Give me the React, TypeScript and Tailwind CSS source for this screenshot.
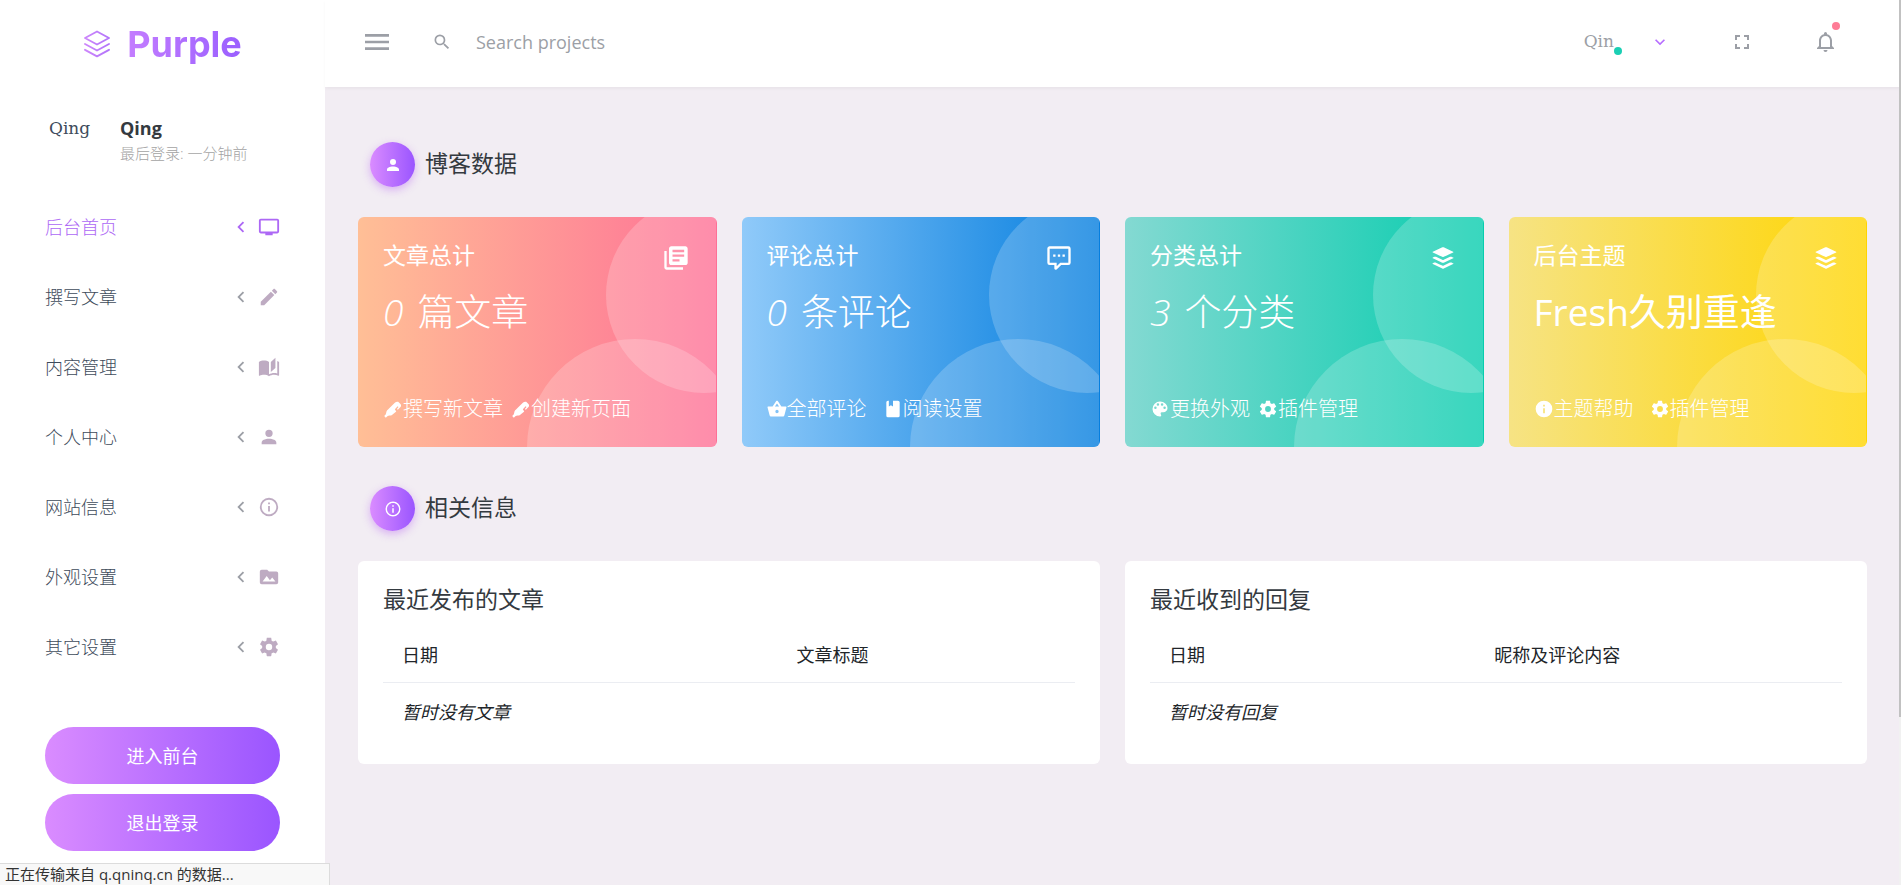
import React from "react";

const PATHS = {
  menu: "M3,6H21V8H3V6M3,11H21V13H3V11M3,16H21V18H3V16Z",
  magnify:
    "M9.5,3A6.5,6.5 0 0,1 16,9.5C16,11.11 15.41,12.59 14.44,13.73L14.71,14H15.5L20.5,19L19,20.5L14,15.5V14.71L13.73,14.44C12.59,15.41 11.11,16 9.5,16A6.5,6.5 0 0,1 3,9.5A6.5,6.5 0 0,1 9.5,3M9.5,5C7,5 5,7 5,9.5C5,12 7,14 9.5,14C12,14 14,12 14,9.5C14,7 12,5 9.5,5Z",
  chevronDown: "M7.41,8.58L12,13.17L16.59,8.58L18,10L12,16L6,10L7.41,8.58Z",
  chevronLeft: "M15.41,16.58L10.83,12L15.41,7.41L14,6L8,12L14,18L15.41,16.58Z",
  fullscreen:
    "M5,5H10V7H7V10H5V5M14,5H19V10H17V7H14V5M17,14H19V19H14V17H17V14M10,17V19H5V14H7V17H10Z",
  bell: "M16,17H7V10.5C7,8 9,6 11.5,6C14,6 16,8 16,10.5M18,16V10.5C18,7.43 15.86,4.86 13,4.18V3.5A1.5,1.5 0 0,0 11.5,2A1.5,1.5 0 0,0 10,3.5V4.18C7.13,4.86 5,7.43 5,10.5V16L3,18V19H20V18M11.5,22A2,2 0 0,0 13.5,20H9.5A2,2 0 0,0 11.5,22Z",
  television:
    "M21,17H3V5H21M21,3H3A2,2 0 0,0 1,5V17A2,2 0 0,0 3,19H8V21H16V19H21A2,2 0 0,0 23,17V5A2,2 0 0,0 21,3Z",
  pencil:
    "M20.71,7.04C21.1,6.65 21.1,6 20.71,5.63L18.37,3.29C18,2.9 17.35,2.9 16.96,3.29L15.12,5.12L18.87,8.87M3,17.25V21H6.75L17.81,9.93L14.06,6.18L3,17.25Z",
  book: "M19 2L14 6.5V17.5L19 13V2M6.5 5C4.55 5 2.45 5.4 1 6.5V21.16C1 21.41 1.25 21.66 1.5 21.66C1.6 21.66 1.65 21.59 1.75 21.59C3.1 20.94 5.05 20.5 6.5 20.5C8.45 20.5 10.55 20.9 12 22C13.35 21.15 15.8 20.5 17.5 20.5C19.15 20.5 20.85 20.81 22.25 21.56C22.35 21.61 22.4 21.59 22.5 21.59C22.75 21.59 23 21.34 23 21.09V6.5C22.4 6.05 21.75 5.75 21 5.5V19C19.9 18.65 18.7 18.5 17.5 18.5C15.8 18.5 13.35 19.15 12 20V6.5C10.55 5.4 8.45 5 6.5 5Z",
  account:
    "M12,4A4,4 0 0,1 16,8A4,4 0 0,1 12,12A4,4 0 0,1 8,8A4,4 0 0,1 12,4M12,14C16.42,14 20,15.79 20,18V20H4V18C4,15.79 7.58,14 12,14Z",
  infoOutline:
    "M11,9H13V7H11M12,20C7.59,20 4,16.41 4,12C4,7.59 7.59,4 12,4C16.41,4 20,7.59 20,12C20,16.41 16.41,20 12,20M12,2A10,10 0 0,0 2,12A10,10 0 0,0 12,22A10,10 0 0,0 22,12A10,10 0 0,0 12,2M11,17H13V11H11V17Z",
  info: "M13,9H11V7H13M13,17H11V11H13M12,2A10,10 0 0,0 2,12A10,10 0 0,0 12,22A10,10 0 0,0 22,12A10,10 0 0,0 12,2Z",
  folderImage:
    "M5,17L9.5,11L13,15.5L15.5,12.5L19,17M20,6H12L10,4H4A2,2 0 0,0 2,6V18A2,2 0 0,0 4,20H20A2,2 0 0,0 22,18V8A2,2 0 0,0 20,6Z",
  settings:
    "M12,15.5A3.5,3.5 0 0,1 8.5,12A3.5,3.5 0 0,1 12,8.5A3.5,3.5 0 0,1 15.5,12A3.5,3.5 0 0,1 12,15.5M19.43,12.97C19.47,12.65 19.5,12.33 19.5,12C19.5,11.67 19.47,11.34 19.43,11L21.54,9.37C21.73,9.22 21.78,8.95 21.66,8.73L19.66,5.27C19.54,5.05 19.27,4.96 19.05,5.05L16.56,6.05C16.04,5.66 15.5,5.32 14.87,5.07L14.5,2.42C14.46,2.18 14.25,2 14,2H10C9.75,2 9.54,2.18 9.5,2.42L9.13,5.07C8.5,5.32 7.96,5.66 7.44,6.05L4.95,5.05C4.73,4.96 4.46,5.05 4.34,5.27L2.34,8.73C2.21,8.95 2.27,9.22 2.46,9.37L4.57,11C4.53,11.34 4.5,11.67 4.5,12C4.5,12.33 4.53,12.65 4.57,12.97L2.46,14.63C2.27,14.78 2.21,15.05 2.34,15.27L4.34,18.73C4.46,18.95 4.73,19.03 4.95,18.95L7.44,17.94C7.96,18.34 8.5,18.68 9.13,18.93L9.5,21.58C9.54,21.82 9.75,22 10,22H14C14.25,22 14.46,21.82 14.5,21.58L14.87,18.93C15.5,18.67 16.04,18.34 16.56,17.94L19.05,18.95C19.27,19.03 19.54,18.95 19.66,18.73L21.66,15.27C21.78,15.05 21.73,14.78 21.54,14.63L19.43,12.97Z",
  library:
    "M4 6H2v14c0 1.1.9 2 2 2h14v-2H4V6zm16-4H8c-1.1 0-2 .9-2 2v12c0 1.1.9 2 2 2h12c1.1 0 2-.9 2-2V4c0-1.1-.9-2-2-2zm-1 9H9V9h10v2zm-4 4H9v-2h6v2zm4-8H9V5h10v2z",
  comment:
    "M9,22A1,1 0 0,1 8,21V18H4A2,2 0 0,1 2,16V4C2,2.89 2.9,2 4,2H20A2,2 0 0,1 22,4V16A2,2 0 0,1 20,18H13.9L10.2,21.71C10,21.9 9.75,22 9.5,22V22H9M10,16V19.08L13.08,16H20V4H4V16H10M17,11H15V9H17V11M13,11H11V9H13V11M9,11H7V9H9V11Z",
  buffer:
    "M12.6,2.86C15.27,4.1 18,5.39 20.66,6.63C20.81,6.7 21,6.75 21,6.95C21,7.15 20.81,7.19 20.66,7.26C18,8.5 15.3,9.77 12.62,11C12.21,11.21 11.79,11.21 11.38,11C8.69,9.76 6,8.5 3.32,7.25C3.18,7.19 3,7.14 3,6.94C3,6.76 3.18,6.71 3.31,6.65C6,5.39 8.74,4.1 11.44,2.85C11.73,2.72 12.3,2.73 12.6,2.86M12,21.15C11.8,21.15 11.66,21.07 11.38,20.97C8.69,19.73 6,18.47 3.33,17.22C3.19,17.15 3,17.11 3,16.9C3,16.7 3.19,16.66 3.34,16.59C3.78,16.38 4.23,16.17 4.67,15.96C5.12,15.76 5.56,15.76 6,15.97C7.79,16.8 9.57,17.63 11.35,18.46C11.79,18.67 12.23,18.66 12.67,18.46C14.45,17.62 16.23,16.79 18,15.96C18.44,15.76 18.87,15.75 19.29,15.95C19.77,16.16 20.24,16.39 20.71,16.61C20.78,16.64 20.85,16.68 20.91,16.73C21.04,16.83 21.04,17 20.91,17.08C20.83,17.14 20.74,17.19 20.65,17.23C18,18.5 15.33,19.72 12.66,20.95C12.46,21.05 12.19,21.15 12,21.15M12,16.17C11.9,16.17 11.55,16.07 11.36,16C8.68,14.74 6,13.5 3.34,12.24C3.2,12.18 3,12.13 3,11.93C3,11.72 3.2,11.68 3.35,11.61C3.8,11.39 4.25,11.18 4.7,10.97C5.13,10.78 5.56,10.78 6,11C7.78,11.82 9.58,12.66 11.38,13.5C11.79,13.69 12.21,13.69 12.63,13.5C14.43,12.65 16.23,11.81 18.04,10.97C18.45,10.78 18.87,10.78 19.29,10.97C19.76,11.19 20.24,11.41 20.71,11.63C20.77,11.66 20.84,11.69 20.9,11.74C21.04,11.85 21.04,12 20.89,12.12C20.84,12.16 20.77,12.19 20.71,12.22C18,13.5 15.31,14.75 12.61,16C12.42,16.09 12.08,16.17 12,16.17Z",
  marker:
    "M14.2,4.6C15.2,3.6 16.8,3 18.2,3.4L21.2,6.2C21.9,7.2 21.8,8.6 21,9.6L17.8,13L16.6,11.9L18.6,9.6L17.6,8.7L14.2,12.4L15.9,14.9L10.4,19.6C9.2,20.3 6.8,19.4 5.2,20.7L3.4,22.4L1.4,20.5L3,18.8C4.2,17.2 3.6,15 4.8,13.8Z",
  basket:
    "M12,2C11.6,2 11.3,2.2 11.1,2.5L6.7,9H1.5C1,9 0.5,9.4 0.6,10L3.1,19.5C3.4,20.4 4.1,21 5,21H19C19.9,21 20.6,20.4 20.9,19.5L23.4,10C23.5,9.4 23,9 22.5,9H17.3L12.9,2.5C12.7,2.2 12.4,2 12,2M12,5.3L14.5,9H9.5L12,5.3M12,13A2,2 0 0,1 14,15A2,2 0 0,1 12,17A2,2 0 0,1 10,15A2,2 0 0,1 12,13Z",
  notebook:
    "M18,22A2,2 0 0,0 20,20V4C20,2.89 19.1,2 18,2H12V9L9.5,7.5L7,9V2H6A2,2 0 0,0 4,4V20A2,2 0 0,0 6,22H18Z",
  palette:
    "M17.5,12A1.5,1.5 0 0,1 16,10.5A1.5,1.5 0 0,1 17.5,9A1.5,1.5 0 0,1 19,10.5A1.5,1.5 0 0,1 17.5,12M14.5,8A1.5,1.5 0 0,1 13,6.5A1.5,1.5 0 0,1 14.5,5A1.5,1.5 0 0,1 16,6.5A1.5,1.5 0 0,1 14.5,8M9.5,8A1.5,1.5 0 0,1 8,6.5A1.5,1.5 0 0,1 9.5,5A1.5,1.5 0 0,1 11,6.5A1.5,1.5 0 0,1 9.5,8M6.5,12A1.5,1.5 0 0,1 5,10.5A1.5,1.5 0 0,1 6.5,9A1.5,1.5 0 0,1 8,10.5A1.5,1.5 0 0,1 6.5,12M12,3A9,9 0 0,0 3,12A9,9 0 0,0 12,21A1.5,1.5 0 0,0 13.5,19.5C13.5,19.11 13.35,18.76 13.11,18.5C12.88,18.23 12.73,17.88 12.73,17.5A1.5,1.5 0 0,1 14.23,16H16A5,5 0 0,0 21,11C21,6.58 16.97,3 12,3Z",
};

type IconName = keyof typeof PATHS;

function Icon({ name, className }: { name: IconName; className: string }) {
  return (
    <svg viewBox="0 0 24 24" fill="currentColor" aria-hidden="true" className={`shrink-0 ${className}`}>
      <path d={PATHS[name]} />
    </svg>
  );
}

function Logo() {
  return (
    <a href="#" className="flex items-center gap-4">
      <svg viewBox="0 0 28 28" fill="none" stroke="url(#logo)" strokeWidth="1.9" strokeLinejoin="round" strokeLinecap="round" aria-hidden="true" className="size-7 shrink-0">
        <defs>
          <linearGradient id="logo" gradientUnits="userSpaceOnUse" x1="0" y1="0" x2="28" y2="0">
            <stop offset="0" stopColor="#cf88fb" />
            <stop offset="1" stopColor="#b072fa" />
          </linearGradient>
        </defs>
        <path d="M14 1.5 26 8 14 14.5 2 8Z" />
        <path d="M2 14 14 20.5 26 14" />
        <path d="M2 19.8 14 26.3 26 19.8" />
      </svg>
      <span className="bg-linear-to-r/srgb from-[#c47dff] to-[#9a5fff] bg-clip-text font-[Inter] text-4xl leading-[44px] font-bold text-transparent">
        Purple
      </span>
    </a>
  );
}

const NAV: { label: string; icon: IconName; active?: boolean }[] = [
  { label: "后台首页", icon: "television", active: true },
  { label: "撰写文章", icon: "pencil" },
  { label: "内容管理", icon: "book" },
  { label: "个人中心", icon: "account" },
  { label: "网站信息", icon: "infoOutline" },
  { label: "外观设置", icon: "folderImage" },
  { label: "其它设置", icon: "settings" },
];

function Sidebar() {
  return (
    <aside className="flex w-[325px] shrink-0 flex-col bg-white">
      <div className="flex items-start px-[45px] pt-7">
        <div className="w-[51px] pl-1 font-['DejaVu_Serif',serif] text-[17px] leading-[26px] text-[#3e4b5b]">Qing</div>
        <div className="pl-6">
          <div className="text-lg leading-[26px] font-bold text-[#343a40]">Qing</div>
          <div className="text-[15px] leading-6 font-light text-[#a3a3a3]">最后登录: 一分钟前</div>
        </div>
      </div>
      <nav className="mt-[27px] flex flex-col">
        {NAV.map((item) => (
          <a
            key={item.label}
            href="#"
            className={`flex h-[70px] items-center px-[45px] text-lg font-light ${item.active ? "text-[#ad68f5]" : "text-[#3e4b5b]"}`}
          >
            <span className="grow">{item.label}</span>
            <Icon name="chevronLeft" className={`mr-1.5 size-[22px] ${item.active ? "" : "text-[#9c9fa6]"}`} />
            <Icon name={item.icon} className={`size-[22px] ${item.active ? "" : "text-[#bba8bff5]"}`} />
          </a>
        ))}
      </nav>
      <div className="mt-[45px] mb-8 flex flex-col gap-2.5 px-[45px]">
        {["进入前台", "退出登录"].map((label) => (
          <button key={label} type="button" className="h-[57px] rounded-full bg-linear-to-r/srgb from-[#da8cff] to-[#9a55ff] text-lg text-white">
            {label}
          </button>
        ))}
      </div>
    </aside>
  );
}

function Header() {
  return (
    <header className="relative z-10 flex h-[87px] shrink-0 bg-white">
      <div className="flex w-[325px] shrink-0 items-center justify-center">
        <Logo />
      </div>
      <div className="flex grow items-center pr-[63px] pb-[3px] pl-9 text-[#9c9fa6] shadow-[0_2px_3px_rgba(0,0,0,0.04)]">
        <button type="button" aria-label="菜单">
          <Icon name="menu" className="size-8" />
        </button>
        <label className="ml-[39px] flex items-center gap-6">
          <Icon name="magnify" className="size-5" />
          <input type="text" placeholder="Search projects" aria-label="Search projects" className="w-72 bg-transparent text-lg outline-none placeholder:text-[#9c9fa6]" />
        </label>
        <button type="button" className="ml-auto flex items-center gap-7 font-['DejaVu_Serif',serif] text-[17px]">
          <span className="relative pr-2">
            Qin
            <span className="absolute right-0 bottom-0 size-2 rounded-full bg-[#1bcfb4]" />
          </span>
          <Icon name="chevronDown" className="size-5 text-[#b66dff]" />
        </button>
        <button type="button" aria-label="全屏" className="ml-[60px]">
          <Icon name="fullscreen" className="size-6" />
        </button>
        <button type="button" aria-label="通知" className="relative ml-[60px]">
          <Icon name="bell" className="size-6" />
          <span className="absolute -top-2 -right-0.5 size-2 rounded-full bg-[#fe7c96]" />
        </button>
      </div>
    </header>
  );
}

function SectionTitle({ icon, children }: { icon: IconName; children: React.ReactNode }) {
  return (
    <h2 className="flex items-center gap-2.5 pl-3 text-[23px] leading-7 text-[#343a40]">
      <span className="flex size-[45px] items-center justify-center rounded-full bg-linear-to-r/srgb from-[#da8cff] to-[#9a55ff] text-white shadow-[0_3px_8px_rgba(183,102,242,0.45)]">
        <Icon name={icon} className="size-[18px]" />
      </span>
      <span className="pb-1">{children}</span>
    </h2>
  );
}

type Stat = {
  title: string;
  lead?: string;
  value: string;
  icon: IconName;
  tone: string;
  links: { icon: IconName; label: string }[];
  gap: string;
};

const STATS: Stat[] = [
  {
    title: "文章总计",
    lead: "0",
    value: "篇文章",
    icon: "library",
    tone: "from-[#ffbf96] to-[#fe7096]",
    links: [{ icon: "marker", label: "撰写新文章" }, { icon: "marker", label: "创建新页面" }],
    gap: "gap-2",
  },
  {
    title: "评论总计",
    lead: "0",
    value: "条评论",
    icon: "comment",
    tone: "from-[#90caf9] to-[#047edf]",
    links: [{ icon: "basket", label: "全部评论" }, { icon: "notebook", label: "阅读设置" }],
    gap: "gap-4",
  },
  {
    title: "分类总计",
    lead: "3",
    value: "个分类",
    icon: "buffer",
    tone: "from-[#84d9d2] to-[#07cdae]",
    links: [{ icon: "palette", label: "更换外观" }, { icon: "settings", label: "插件管理" }],
    gap: "gap-2",
  },
  {
    title: "后台主题",
    value: "Fresh久别重逢",
    icon: "buffer",
    tone: "from-[#f6e384] to-[#ffd500]",
    links: [{ icon: "info", label: "主题帮助" }, { icon: "settings", label: "插件管理" }],
    gap: "gap-4",
  },
];

function StatCard({ stat }: { stat: Stat }) {
  return (
    <article className={`relative overflow-hidden rounded-md bg-linear-to-r/srgb px-[25px] pt-6 pb-6 text-white ${stat.tone}`}>
      <svg viewBox="0 0 208 230" fill="#fff" fillOpacity="0.2" aria-hidden="true" className="absolute top-0 right-px h-[230px] w-[208px]">
        <circle cx="196" cy="78" r="98" />
        <circle cx="127" cy="230" r="108" />
      </svg>
      <div className="relative">
        <div className="flex items-start justify-between">
          <h3 className="text-[23px] leading-7">{stat.title}</h3>
          <Icon name={stat.icon} className="mt-[3px] mr-0.5 size-7" />
        </div>
        <p className={`mt-[18px] text-[37px] leading-[44px] ${stat.lead ? "font-light" : ""}`}>
          {stat.lead && <span className="mr-3.5 italic">{stat.lead}</span>}
          {stat.value}
        </p>
        <p className={`mt-[61px] flex text-xl leading-7 ${stat.gap}`}>
          {stat.links.map((link) => (
            <a key={link.label} href="#" className="flex items-center font-light whitespace-nowrap">
              <Icon name={link.icon} className="size-5" />
              {link.label}
            </a>
          ))}
        </p>
      </div>
    </article>
  );
}

function TableCard({ title, columns, empty, firstWidth }: { title: string; columns: [string, string]; empty: string; firstWidth: string }) {
  return (
    <article className="rounded-md bg-white px-[25px] pt-6 pb-6">
      <h3 className="text-[23px] leading-7 text-[#343a40]">{title}</h3>
      <table className="mt-[15px] w-full table-fixed text-left text-lg leading-[22px] text-[#212529]">
        <thead>
          <tr className="border-b border-[#ebedf2]">
            <th className={`px-[19px] py-4 font-normal ${firstWidth}`}>{columns[0]}</th>
            <th className="px-[19px] py-4 font-normal">{columns[1]}</th>
          </tr>
        </thead>
        <tbody>
          <tr>
            <td colSpan={2} className="px-[19px] pt-[18px] pb-[17px] italic">{empty}</td>
          </tr>
        </tbody>
      </table>
    </article>
  );
}

export default function App() {
  return (
    <div className="relative flex min-h-screen flex-col bg-[#f2edf3] font-['Open_Sans','Noto_Sans_CJK_SC',sans-serif]">
      <Header />
      <div className="flex grow">
        <Sidebar />
        <main className="min-w-0 grow pt-[55px] pr-[34px] pl-[33px]">
          <SectionTitle icon="account">博客数据</SectionTitle>
          <section className="mt-[30px] grid grid-cols-4 gap-[25px]">
            {STATS.map((stat) => (
              <StatCard key={stat.title} stat={stat} />
            ))}
          </section>
          <div className="mt-[39px]">
            <SectionTitle icon="infoOutline">相关信息</SectionTitle>
          </div>
          <section className="mt-[30px] grid grid-cols-2 gap-[25px]">
            <TableCard title="最近发布的文章" columns={["日期", "文章标题"]} empty="暂时没有文章" firstWidth="w-[57%]" />
            <TableCard title="最近收到的回复" columns={["日期", "昵称及评论内容"]} empty="暂时没有回复" firstWidth="w-[47%]" />
          </section>
        </main>
      </div>
      <div role="status" className="fixed bottom-0 left-0 z-20 w-[330px] truncate border-t border-r border-[#dcdcdc] bg-[#f8f8f8] px-[5px] text-[15px] leading-[21px] text-[#333]">
        正在传输来自 q.qninq.cn 的数据...
      </div>
      <div className="fixed top-0 right-0 z-20 h-full w-[2px] bg-[#f1f1f1]">
        <div className="h-[81%] bg-[#c1c1c1]" />
      </div>
    </div>
  );
}
